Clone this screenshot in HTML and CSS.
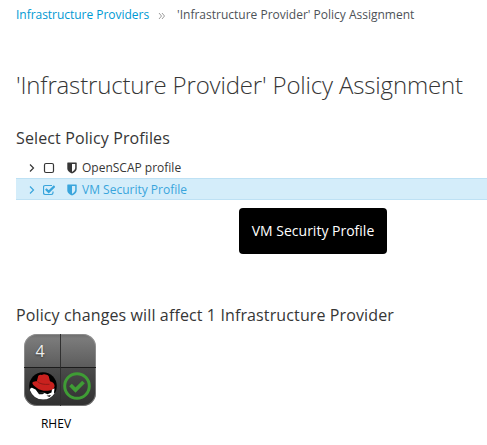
FILE: index.html
```html
<!DOCTYPE html>
<html lang="en">
<head>
<meta charset="utf-8">
<title>Policy Assignment</title>
<link rel="stylesheet" href="styles.css">
</head>
<body>
<nav class="breadcrumb">
  <a class="crumb-link">Infrastructure Providers</a>
  <svg class="crumb-sep" viewBox="0 0 8 8"><path d="M1 1l2.500 3L1 7M4 1l2.500 3L4 7"/></svg>
  <span class="crumb-current">'Infrastructure Provider' Policy Assignment</span>
</nav>
<h1>'Infrastructure Provider' Policy Assignment</h1>
<h3 class="profiles-heading">Select Policy Profiles</h3>
<ul class="tree">
  <li class="node">
    <svg class="chevron" viewBox="0 0 6 10"><path d="M1 1.500l3.500 3.500L1 8.500"/></svg>
    <svg class="check" viewBox="0 0 12 12"><rect x="1.500" y="1.500" width="9" height="9" rx="1.500"/></svg>
    <svg class="shield" viewBox="0 0 10 12"><path fill-rule="evenodd" d="M.8.600h8.400q.5 0 .5.500v5.300Q9.700 9.300 5 11.600.3 9.300.3 6.400V1.100Q.3.600.8.600zM5 2v7.900q3.200-1.800 3.200-3.600V2z"/></svg>
    <span>OpenSCAP profile</span>
  </li>
  <li class="node selected">
    <svg class="chevron" viewBox="0 0 6 10"><path d="M1 1.500l3.500 3.500L1 8.500"/></svg>
    <svg class="check" viewBox="0 0 12 12"><path d="M9 1.500H2.200Q.5 1.500.5 3.200v5.600q0 1.700 1.700 1.700h6.100q1.700 0 1.700-1.700V7.500"/><path class="tick" d="M2.800 5l2.900 2.900L11.600 2"/></svg>
    <svg class="shield" viewBox="0 0 10 12"><path fill-rule="evenodd" d="M.8.600h8.400q.5 0 .5.500v5.300Q9.700 9.300 5 11.600.3 9.300.3 6.400V1.100Q.3.600.8.600zM5 2v7.900q3.200-1.800 3.200-3.600V2z"/></svg>
    <span>VM Security Profile</span>
    <div class="tooltip">VM Security Profile</div>
  </li>
</ul>
<h3 class="affect-heading">Policy changes will affect 1 Infrastructure Provider</h3>
<figure class="provider">
  <div class="quadicon">
    <div class="quad count">4</div>
    <div class="quad"></div>
    <div class="quad hat">
      <svg class="vendor" viewBox="0 0 28 28">
        <circle cx="14" cy="14" r="13.800" fill="#000"/>
        <path fill="#fff" d="M.8 18Q1.500 15.500 3 15.800L6.500 17.500 9 20l6 .7 3.500 1.500 4-1.700.5-3.500 2.500-.5-.5 4 .5 1A13.600 13.600 0 0 1 14 27.600Q4.500 27.500.8 18z"/>
        <path d="M7 18l3.500 2 6 .5-3 1.800H10zM17.500 23.800l4.500-.8-1.500 2z" fill="#111"/>
        <path fill="#c9211e" d="M9.300 3.800Q11 2.200 13 3q1.300-1.200 3.500-.6 2.500.3 3.200 1.800l1.300 5q4.500 1.300 4.600 4.700-.2 4-6.600 4.900-7.500.3-11-2.800-4.500-2.800-4.700-5.200.8-1.800 4.500-1.500z"/>
        <path d="M8.500 9.500q3 3.500 12 2.800" fill="none" stroke="#7d1613" stroke-width=".8"/>
      </svg>
    </div>
    <div class="quad ok">
      <svg class="status" viewBox="0 0 28 28"><circle cx="14" cy="14" r="12.300"/><path d="M7.500 13l5 5L20.500 10" stroke-width="3.800"/></svg>
    </div>
  </div>
  <figcaption>RHEV</figcaption>
</figure>
</body>
</html>
```
FILE: styles.css
```css
* { box-sizing: border-box; }
body {
  margin: 0;
  padding-left: 16px;
  height: 445px;
  overflow: hidden;
  background: #fff;
  color: #363636;
  font: 12px/20px "Open Sans", sans-serif;
}
.breadcrumb { display: flex; align-items: center; height: 20px; margin-top: 5px; white-space: nowrap; }
.crumb-link { color: #0099d3; letter-spacing: -.03px; }
.crumb-sep { width: 8px; height: 8px; margin: 1px 11px 0 9px; fill: none; stroke: #9c9c9c; stroke-width: 1; }
.crumb-current { color: #4d5258; }
h1 { margin: 47px 0 0; font-size: 24px; line-height: 26px; font-weight: 300; letter-spacing: -.16px; white-space: nowrap; }
h3 { margin: 0; font-size: 16px; line-height: 18px; font-weight: 400; letter-spacing: .12px; white-space: nowrap; }
.profiles-heading { margin-top: 31px; }
.tree { margin: 9px 0 0; padding: 0; list-style: none; }
.node { position: relative; display: flex; align-items: center; height: 22px; padding: 1px 0 0 13px; border: 1px solid transparent; border-width: 1px 0; white-space: nowrap; }
.selected { background: #d4edfa; border-color: #bee1f4; color: #39a5dc; }
.chevron { width: 6px; height: 10px; margin-right: 8px; fill: none; stroke: currentColor; stroke-width: 1.2; }
.check { width: 12px; height: 12px; margin-right: 12px; fill: none; stroke: currentColor; stroke-width: 1.2; }
.tick { stroke-width: 2.2; }
.shield { width: 10px; height: 12px; margin-right: 5px; fill: currentColor; }
.tooltip {
  position: absolute;
  left: 223px;
  top: 29px;
  width: 148px;
  height: 46px;
  border-radius: 4px;
  background: #000;
  color: #fff;
  font-size: 14px;
  line-height: 46px;
  text-align: center;
}
.affect-heading { margin-top: 106px; }
.provider { width: 80px; margin: 10px 0 0; }
.quadicon {
  display: grid;
  grid-template-columns: 37px 35px;
  grid-template-rows: 34px 38px;
  width: 72px;
  height: 72px;
  margin-left: 8px;
  overflow: hidden;
  border-radius: 13px;
  background: linear-gradient(#6c6c6c, #7b7b7b 6%, #5c5c5c 46%, #4b4b4b 46%, #303030);
  box-shadow: inset 0 0 0 1px rgba(160, 160, 160, .6);
}
.quad { display: flex; align-items: center; justify-content: center; border-bottom: 1px solid #1c1c1c; }
.quad:nth-child(odd) { border-right: 1px solid #303030; }
.quad:nth-child(n+3) { border-bottom: 0; padding-bottom: 2px; }
.count { padding-right: 4px; color: #eee; font-size: 16px; text-shadow: 0 1px 2px #333; }
.hat { padding-left: 2px; }
.ok { padding-right: 3px; }
.vendor, .status { width: 28px; height: 28px; flex: none; }
.status { fill: none; stroke: #3f9c35; stroke-width: 3; }
figcaption { margin-top: 8px; color: #000; text-align: center; }
```
